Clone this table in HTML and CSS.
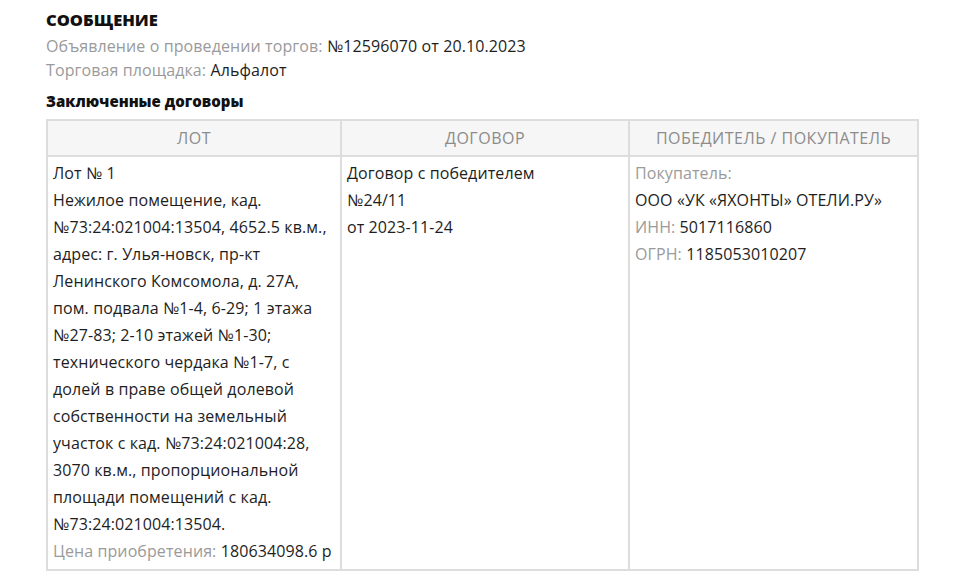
FILE: index.html
```html
<!DOCTYPE html>
<html lang="ru">
<head>
<meta charset="utf-8">
<link rel="stylesheet" href="styles.css">
</head>
<body>
<div class="page">
  <h1 class="title">СООБЩЕНИЕ</h1>
  <div class="meta"><span class="label">Объявление о проведении торгов:</span> №12596070 от 20.10.2023</div>
  <div class="meta"><span class="label">Торговая площадка:</span> Альфалот</div>
  <h2 class="subtitle">Заключенные договоры</h2>
  <table class="deals">
    <colgroup>
      <col class="c1"><col class="c2"><col class="c3">
    </colgroup>
    <thead>
      <tr><th>Лот</th><th>Договор</th><th>Победитель / Покупатель</th></tr>
    </thead>
    <tbody>
      <tr>
        <td>
          <div>Лот № 1</div>
          <div>Нежилое помещение, кад. №73:24:021004:13504, 4652.5 кв.м., адрес: г. Улья-новск, пр-кт Ленинского Комсомола, д. 27А, пом. подвала №1-4, 6-29; 1 этажа №27-83; 2-10 этажей №1-30; технического чердака №1-7, с долей в праве общей долевой собственности на земельный участок с кад. №73:24:021004:28, 3070 кв.м., пропорциональной площади помещений с кад. №73:24:021004:13504.</div>
          <div><span class="label">Цена приобретения:</span> 180634098.6 р</div>
        </td>
        <td>
          <div>Договор с победителем</div>
          <div>№24/11</div>
          <div>от 2023-11-24</div>
        </td>
        <td>
          <div class="label">Покупатель:</div>
          <div>ООО «УК «ЯХОНТЫ» ОТЕЛИ.РУ»</div>
          <div><span class="label">ИНН:</span> 5017116860</div>
          <div><span class="label">ОГРН:</span> 1185053010207</div>
        </td>
      </tr>
    </tbody>
  </table>
</div>
</body>
</html>
```
FILE: styles.css
```css
html, body {
  margin: 0;
  padding: 0;
  background: #fff;
}
body {
  font-family: "Open Sans", Lato, sans-serif;
  color: #1e1e1e;
}
.page {
  padding: 9px 0 0 46px;
}
.title {
  margin: 0 0 3px;
  font-size: 16.5px;
  font-weight: 800;
  line-height: 22px;
  color: #111;
}
.meta {
  font-size: 16px;
  letter-spacing: 0.1px;
  line-height: 24px;
}
.label {
  color: #9a9a9a;
}
.subtitle {
  margin: 9px 0 8px;
  font-size: 15px;
  font-weight: 800;
  line-height: 20px;
  color: #111;
}
.deals {
  border-collapse: collapse;
  width: 871px;
  table-layout: fixed;
  font-size: 16px;
  letter-spacing: 0.1px;
}
.c1 { width: 294px; }
.c2 { width: 288px; }
.c3 { width: 289px; }
.deals th, .deals td {
  border: 2px solid #dddddd;
}
.deals th {
  background: #f6f6f6;
  color: #8c8c8c;
  font-weight: 400;
  text-transform: uppercase;
  letter-spacing: 0.5px;
  height: 34px;
  padding: 0 4px;
  text-align: center;
}
.deals td {
  vertical-align: top;
  line-height: 27px;
  padding: 3px 5px 4px 5px;
}
```
